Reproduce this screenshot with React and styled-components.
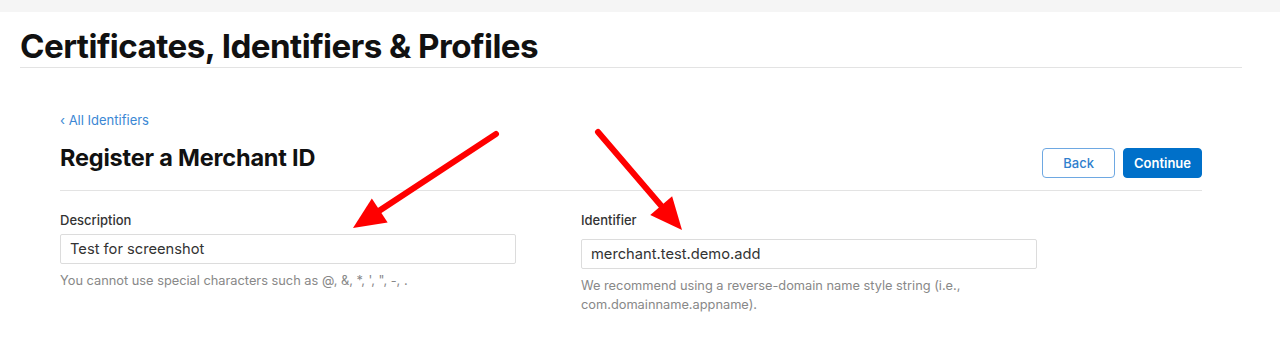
import React from "react";
import styled, { createGlobalStyle } from "styled-components";

const GlobalStyle = createGlobalStyle`
    html, body {
        margin: 0;
        padding: 0;
        background: #fff;
        font-family: Inter, "Liberation Sans", sans-serif;
        color: #1d1d1f;
    }
`;

const Page = styled.div`
    position: relative;
    width: 1280px;
    height: 362px;
    overflow: hidden;
`;

const TopBar = styled.div`
    height: 12px;
    background: #f5f5f5;
`;

const Header = styled.header`
    margin: 0 38px 0 20px;
    border-bottom: 1px solid #e3e3e3;
    padding: 15px 0 2px;
`;

const PageTitle = styled.h1`
    margin: 0;
    font-size: 33.2px;
    line-height: 38px;
    font-weight: 700;
    letter-spacing: -0.55px;
    color: #111;
`;

const Content = styled.main`
    padding: 41px 78px 0 60px;
`;

const BackLink = styled.a`
    display: inline-block;
    font-size: 13px;
    line-height: 16px;
    color: #3b87d4;
    text-decoration: none;
`;

const TitleRow = styled.div`
    display: flex;
    align-items: flex-end;
    justify-content: space-between;
    border-bottom: 1px solid #e3e3e3;
    padding: 15px 0 12px;
`;

const SubTitle = styled.h2`
    margin: 0 0 6px;
    font-size: 23.5px;
    line-height: 28px;
    font-weight: 700;
    letter-spacing: -0.2px;
    color: #111;
`;

const Actions = styled.div`
    display: flex;
    gap: 8px;
`;

const Button = styled.button`
    box-sizing: border-box;
    height: 30px;
    padding: 0 ${(p) => (p.$primary ? "10px" : "20px")};
    border-radius: 4px;
    font-family: inherit;
    font-size: 13px;
    font-weight: ${(p) => (p.$primary ? 600 : 500)};
    border: 1px solid ${(p) => (p.$primary ? "#0070c9" : "#6ea8e2")};
    background: ${(p) => (p.$primary ? "#0070c9" : "#fff")};
    color: ${(p) => (p.$primary ? "#fff" : "#2f7fce")};
    cursor: pointer;
`;

const Form = styled.div`
    display: grid;
    grid-template-columns: 456px 456px;
    column-gap: 65px;
    padding-top: 21px;
`;

const Field = styled.div`
    display: flex;
    flex-direction: column;
`;

const Label = styled.label`
    font-size: 13px;
    line-height: 16px;
    font-weight: 500;
    color: #333;
    margin-bottom: ${(p) => p.$gap}px;
`;

const Input = styled.input`
    box-sizing: border-box;
    height: 30px;
    width: 100%;
    border: 1px solid #dcdcdc;
    border-radius: 2px;
    padding: 0 9px;
    font-family: inherit;
    font-size: 14.7px;
    color: #333;
    outline: none;
`;

const Hint = styled.p`
    margin: 7px 0 0;
    font-size: 12.8px;
    line-height: 19px;
    color: #888;
`;

const Annotations = styled.svg`
    position: absolute;
    left: 0;
    top: 0;
    pointer-events: none;
`;

const Arrow = ({ x1, y1, x2, y2, head }) => {
    const dx = x2 - x1;
    const dy = y2 - y1;
    const len = Math.hypot(dx, dy);
    const ux = dx / len;
    const uy = dy / len;
    const bx = x2 - ux * head;
    const by = y2 - uy * head;
    const half = head * 0.45;
    const p1 = `${bx - uy * half},${by + ux * half}`;
    const p2 = `${bx + uy * half},${by - ux * half}`;
    return (
        <g>
            <line x1={x1} y1={y1} x2={bx + ux * 4} y2={by + uy * 4} stroke="#f00" strokeWidth="6" strokeLinecap="round" />
            <polygon points={`${x2},${y2} ${p1} ${p2}`} fill="#f00" />
        </g>
    );
};

export default function App() {
    return (
        <>
            <GlobalStyle />
            <Page>
                <TopBar />
                <Header>
                    <PageTitle>Certificates, Identifiers &amp; Profiles</PageTitle>
                </Header>
                <Content>
                    <BackLink href="#">‹ All Identifiers</BackLink>
                    <TitleRow>
                        <SubTitle>Register a Merchant ID</SubTitle>
                        <Actions>
                            <Button>Back</Button>
                            <Button $primary>Continue</Button>
                        </Actions>
                    </TitleRow>
                    <Form>
                        <Field>
                            <Label $gap={6}>Description</Label>
                            <Input defaultValue="Test for screenshot" />
                            <Hint>You cannot use special characters such as @, &amp;, *, ', ", -, .</Hint>
                        </Field>
                        <Field>
                            <Label $gap={11}>Identifier</Label>
                            <Input defaultValue="merchant.test.demo.add" />
                            <Hint>We recommend using a reverse-domain name style string (i.e., com.domainname.appname).</Hint>
                        </Field>
                    </Form>
                </Content>
                <Annotations width="1280" height="362">
                    <Arrow x1={496} y1={134} x2={353} y2={228} head={32} />
                    <Arrow x1={598} y1={132} x2={682} y2={230} head={32} />
                </Annotations>
            </Page>
        </>
    );
}
